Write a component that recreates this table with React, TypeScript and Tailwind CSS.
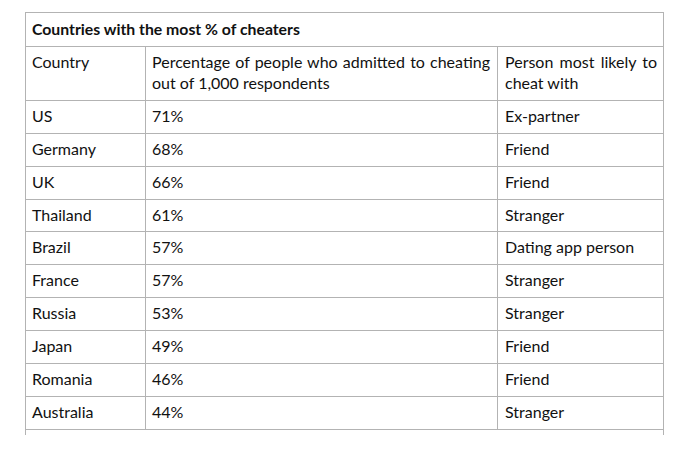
import React from "react";

const rows: [string, string, string, string][] = [
  ["US", "71%", "Ex-partner", "h-[33px]"],
  ["Germany", "68%", "Friend", "h-[33px]"],
  ["UK", "66%", "Friend", "h-[33px]"],
  ["Thailand", "61%", "Stranger", "h-[32px]"],
  ["Brazil", "57%", "Dating app person", "h-[33px]"],
  ["France", "57%", "Stranger", "h-[33px]"],
  ["Russia", "53%", "Stranger", "h-[33px]"],
  ["Japan", "49%", "Friend", "h-[33px]"],
  ["Romania", "46%", "Friend", "h-[33px]"],
  ["Australia", "44%", "Stranger", "h-[33px]"],
];

export default function App() {
  return (
    <div
      className="w-[679px] h-[452px] bg-white text-[#111] overflow-hidden"
      style={{ fontFamily: "Lato, 'Open Sans', sans-serif" }}
    >
      <div className="ml-[25px] mt-[12px] w-[639px] border-x border-t border-[#b3b3b3]">
        <div className="h-[34px] border-b border-[#b3b3b3] pl-[6px] pt-[6px] text-[15.8px] leading-[20px] font-bold">
          Countries with the most % of cheaters
        </div>
        <div className="grid grid-cols-[120px_352px_165px] h-[54px] border-b border-[#b3b3b3] text-[16px] leading-[21px]">
          <div className="border-r border-[#b3b3b3] pl-[6px] pt-[4px]">Country</div>
          <div className="border-r border-[#b3b3b3] pl-[6px] pr-[7px] pt-[4px] text-justify">
            Percentage of people who admitted to cheating out of 1,000 respondents
          </div>
          <div className="pl-[7px] pr-[6px] pt-[4px] text-justify">Person most likely to cheat with</div>
        </div>
        {rows.map(([c, p, w, h]) => (
          <div
            key={c}
            className={`grid grid-cols-[120px_352px_165px] ${h} border-b border-[#b3b3b3] text-[16px] leading-[20px]`}
          >
            <div className="border-r border-[#b3b3b3] pl-[6px] pt-[5px]">{c}</div>
            <div className="border-r border-[#b3b3b3] pl-[6px] pt-[5px]">{p}</div>
            <div className="pl-[7px] pt-[5px]">{w}</div>
          </div>
        ))}
        <div className="h-[5px]" />
      </div>
    </div>
  );
}
